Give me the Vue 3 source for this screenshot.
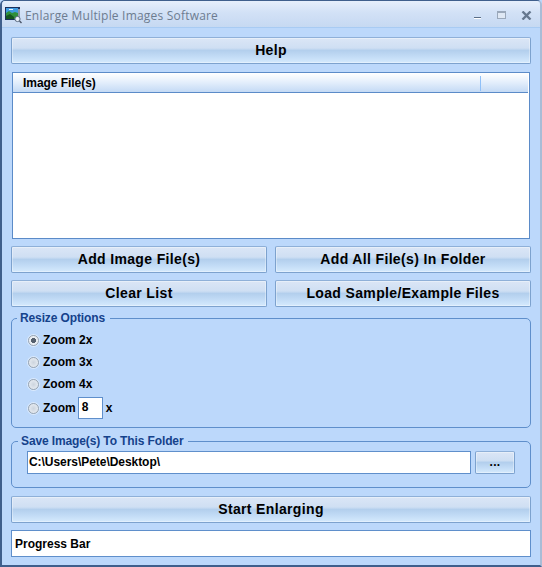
<template>
  <div class="window">
    <div class="titlebar">
      <svg class="app-icon" width="18" height="18" viewBox="0 0 18 18">
        <rect x="0" y="1" width="15" height="13" fill="#1a2f5a" />
        <rect x="1" y="2" width="12" height="5" fill="#3f9be0" />
        <rect x="4" y="3" width="4" height="1" fill="#e6f3fc" />
        <path d="M1 7l3-2 3 2 3-1 3 1v6H1z" fill="#2f8f3a" />
        <path d="M1 10l4-2 4 3v2H1z" fill="#14561f" />
        <rect x="13" y="3" width="2" height="10" fill="#8b95a8" />
        <circle cx="12.5" cy="13" r="2.6" fill="#e8f0fa" stroke="#5a6a80" />
        <path d="M14.5 15l2 2" stroke="#4a5568" stroke-width="1.4" />
      </svg>
      <span class="title">Enlarge Multiple Images Software</span>
      <div class="controls">
        <svg class="min" width="8" height="4" viewBox="0 0 8 4"><rect width="7" height="1" y="1" fill="#5a6e88" /><rect width="7" height="1" y="2" fill="#fff" /></svg>
        <svg width="9" height="8" viewBox="0 0 9 8"><rect x="0.5" y="0.5" width="8" height="7" fill="#dfe8f4" stroke="#9aa8ba" /><rect x="0" y="0" width="9" height="2" fill="#9aa8ba" /></svg>
        <svg width="11" height="9" viewBox="0 0 11 9"><path d="M1.5 0.5l8 8M9.5 0.5l-8 8" stroke="#66788f" stroke-width="2.4" /></svg>
      </div>
    </div>

    <div class="content">
      <button class="btn">Help</button>

      <div class="list">
        <div class="list-header">
          <span class="col-name">Image File(s)</span>
          <span class="col-rest"></span>
        </div>
      </div>

      <div class="btn-grid">
        <button v-for="label in actions" :key="label" class="btn">{{ label }}</button>
      </div>

      <fieldset class="group resize">
        <legend>Resize Options</legend>
        <label v-for="opt in zoomOptions" :key="opt.label" class="radio-row" :style="{ height: opt.height + 'px' }">
          <span class="radio" :class="{ checked: opt.checked }"></span>
          <span>{{ opt.label }}</span>
          <template v-if="opt.custom">
            <span class="zoom-box">8</span>
            <span class="zoom-x">x</span>
          </template>
        </label>
      </fieldset>

      <fieldset class="group save">
        <legend>Save Image(s) To This Folder</legend>
        <div class="path-row">
          <div class="path-input">C:\Users\Pete\Desktop\</div>
          <button class="btn browse">...</button>
        </div>
      </fieldset>

      <button class="btn">Start Enlarging</button>

      <div class="progress">Progress Bar</div>
    </div>
  </div>
</template>

<script setup>
const actions = [
  'Add Image File(s)',
  'Add All File(s) In Folder',
  'Clear List',
  'Load Sample/Example Files',
];

const zoomOptions = [
  { label: 'Zoom 2x', checked: true, height: 22 },
  { label: 'Zoom 3x', height: 22 },
  { label: 'Zoom 4x', height: 22 },
  { label: 'Zoom', custom: true, height: 26 },
];
</script>

<style>
html,
body {
  margin: 0;
  background: #bcd8fb;
}
</style>

<style scoped>
.window {
  width: 542px;
  height: 567px;
  box-sizing: border-box;
  background: #bcd8fb;
  border-style: solid;
  border-color: #3f5f8c #a9bcd6 #3f5f8c #3f5f8c;
  border-width: 1px 2px 2px 2px;
  border-radius: 5px 5px 0 0;
  font-family: "Liberation Sans", Arial, sans-serif;
  color: #000;
  overflow: hidden;
}

.titlebar {
  display: flex;
  align-items: center;
  height: 27px;
  box-sizing: border-box;
  padding: 2px 7px 0 3px;
  background: linear-gradient(#e6effb 0, #d2e1f6 45%, #c6d9f2 100%);
  border-bottom: 1px solid #a8cbf3;
}

.app-icon {
  margin-right: 2px;
}

.title {
  font-family: "Open Sans", sans-serif;
  font-size: 12px;
  letter-spacing: 0.2px;
  color: #6d7c90;
}

.controls {
  margin-left: auto;
  display: flex;
  align-items: center;
  gap: 15px;
  padding-right: 1px;
}

.controls .min {
  margin-top: 5px;
}

.content {
  display: flex;
  flex-direction: column;
  padding: 9px 9px 0 9px;
}

.btn {
  height: 27px;
  padding: 0 0 2px;
  box-sizing: border-box;
  border: 1px solid #7da2ce;
  border-top-color: #8fb0d8;
  border-radius: 2px;
  background: linear-gradient(#dbe6f6 0, #cfdff3 40%, #b3cfed 50%, #c3dcf6 75%, #d5eafd 100%);
  box-shadow: inset 0 0 0 1px rgba(255, 255, 255, 0.35);
  font-family: "Liberation Sans", Arial, sans-serif;
  font-weight: 700;
  font-size: 14px;
  letter-spacing: 0.35px;
  color: #000;
}

.list {
  margin: 8px 1px 7px;
  height: 167px;
  box-sizing: border-box;
  background: #fff;
  border: 1px solid #5b8bc8;
}

.list-header {
  display: flex;
  height: 20px;
  box-sizing: border-box;
  margin-right: 1px;
  background: linear-gradient(#fff 0, #e6f0fc 45%, #c4daf5 100%);
  border-bottom: 1px solid #5b8bc8;
  font-size: 12px;
  font-weight: 700;
}

.col-name {
  width: 468px;
  height: 15px;
  box-sizing: border-box;
  margin-top: 3px;
  padding-left: 10px;
  letter-spacing: -0.05px;
  border-right: 1px solid #8fc0f8;
}

.btn-grid {
  display: grid;
  grid-template-columns: 256px 256px;
  column-gap: 8px;
  row-gap: 7px;
}

.group {
  margin: 0;
  min-width: 0;
  border: 1px solid #5f8fcb;
  border-radius: 5px;
  box-sizing: border-box;
}

.group legend {
  margin-left: -9px;
  padding: 0 5px 0 3px;
  font-size: 12px;
  font-weight: 700;
  letter-spacing: -0.12px;
  color: #15428b;
  line-height: 14px;
}

.resize {
  margin-top: 4px;
  height: 117px;
  padding: 4px 0 0 16px;
}

.resize legend {
  margin-left: -11px;
}

.radio-row {
  display: flex;
  align-items: center;
  font-size: 12px;
  font-weight: 700;
}

.radio {
  width: 11px;
  height: 11px;
  box-sizing: border-box;
  margin-right: 4px;
  border-radius: 50%;
  border: 1px solid #9aa5b1;
  background: radial-gradient(circle at 50% 50%, #cdd5de 0, #e0e6ed 60%, #f5f7fa 100%);
  box-shadow: 0 0 0 1px rgba(255, 255, 255, 0.45);
}

.radio.checked {
  background: radial-gradient(circle, #56606e 0, #56606e 36%, #e6ebf1 42%, #f5f7fa 100%);
}

.zoom-box {
  width: 25px;
  height: 22px;
  box-sizing: border-box;
  margin-left: 2px;
  padding: 2px 0 0 3px;
  background: #fff;
  border: 1px solid #5f8fcb;
}

.zoom-x {
  margin-left: 3px;
}

.save {
  margin-top: 6px;
  height: 54px;
  padding: 3px 0 0 15px;
}

.path-row {
  display: flex;
  gap: 4px;
}

.path-input {
  width: 444px;
  height: 23px;
  box-sizing: border-box;
  padding: 3px 0 0 1px;
  background: #fff;
  border: 1px solid #5f8fcb;
  font-size: 12px;
  font-weight: 700;
  letter-spacing: -0.05px;
}

.browse {
  width: 40px;
  height: 23px;
  font-size: 12px;
}

.save + .btn {
  margin-top: 8px;
}

.progress {
  margin-top: 7px;
  height: 27px;
  box-sizing: border-box;
  padding: 6px 0 0 3px;
  background: #fff;
  border: 1px solid #5f8fcb;
  font-size: 12px;
  font-weight: 700;
}
</style>
